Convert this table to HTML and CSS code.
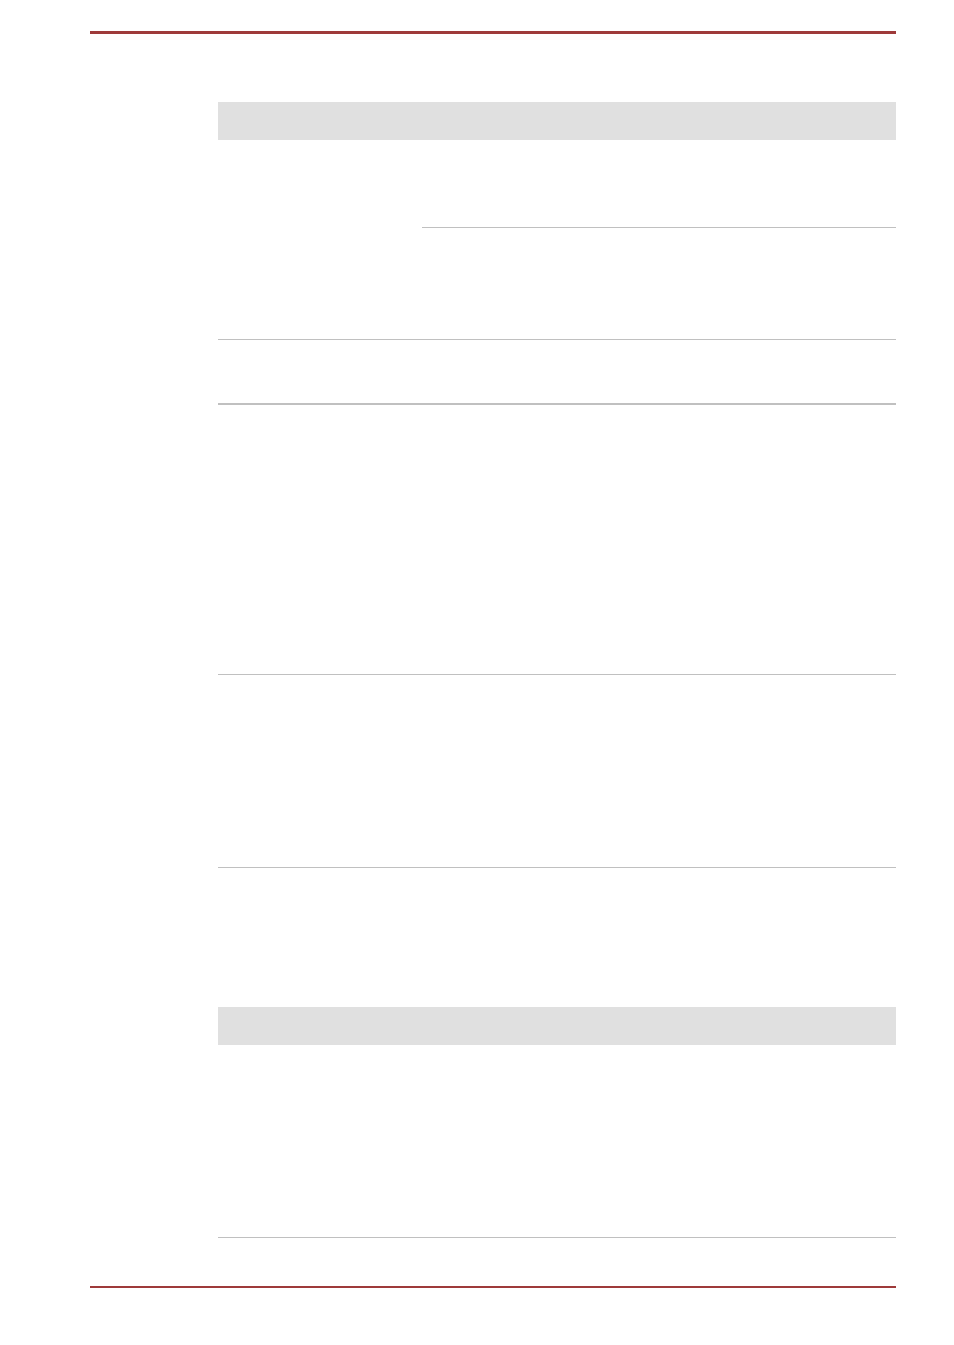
FILE: index.html
```html
<!DOCTYPE html>
<html lang="en">

<head>
    <meta charset="UTF-8">
    <meta name="viewport" content="width=device-width, initial-scale=1.0">
    <title>Manual Page</title>
    <link rel="stylesheet" href="styles.css">
</head>

<body>
    <div class="page">
        <div class="rule rule-top"></div>

        <div class="spec-table first-table">
            <div class="spec-head"></div>

            <div class="spec-row split-row">
                <div class="spec-label"></div>
                <div class="spec-values">
                    <div class="sub-cell sub-one"></div>
                    <div class="sub-cell sub-two"></div>
                </div>
            </div>

            <div class="spec-row row-short"></div>
            <div class="spec-row row-tall"></div>
            <div class="spec-row row-mid"></div>
        </div>

        <div class="spec-table second-table">
            <div class="spec-head"></div>
            <div class="spec-row row-mid"></div>
        </div>

        <div class="rule rule-bottom"></div>
    </div>
</body>

</html>
```

FILE: styles.css
```css
body {
    margin: 0;
    padding: 0;
    background: #fff;
    font-family: "Liberation Sans", Arial, sans-serif;
}

.page {
    width: 954px;
    padding-top: 31px;
}

.rule {
    margin-left: 90px;
    width: 806px;
    background: #9e3a3a;
}

.rule-top {
    height: 3px;
}

.rule-bottom {
    height: 2px;
    margin-top: 48px;
}

.spec-table {
    margin-left: 218px;
    width: 678px;
}

.first-table {
    margin-top: 68px;
}

.second-table {
    margin-top: 139px;
}

.spec-head {
    height: 38px;
    background: #e0e0e0;
}

.spec-row {
    border-bottom: 1px solid #c0c0c0;
}

.split-row {
    display: grid;
    grid-template-columns: 204px 1fr;
}

.sub-one {
    height: 87px;
    border-bottom: 1px solid #c0c0c0;
}

.sub-two {
    height: 111px;
}

.row-short {
    height: 63px;
    border-bottom-width: 2px;
}

.row-tall {
    height: 269px;
}

.row-mid {
    height: 192px;
}
```
